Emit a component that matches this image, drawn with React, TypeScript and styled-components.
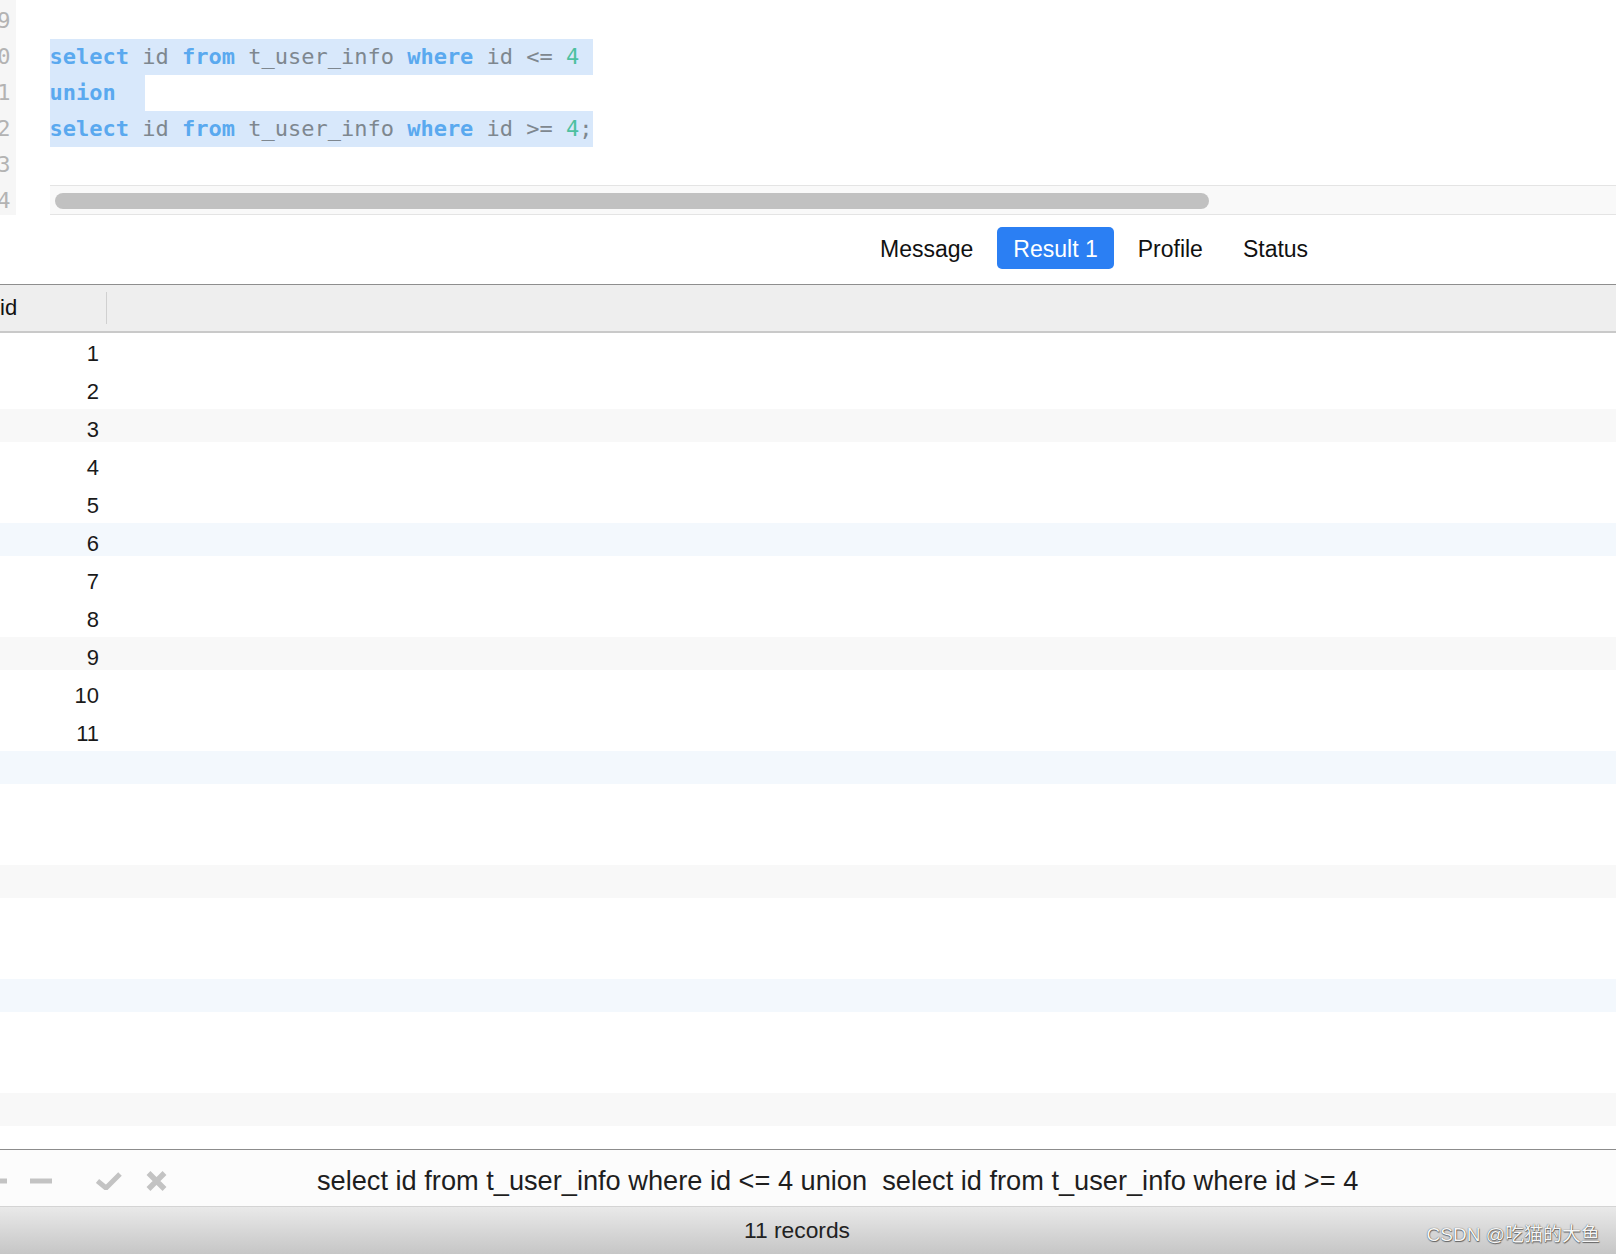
import styled, { createGlobalStyle } from 'styled-components';

const sans = `"Liberation Sans", Arial, sans-serif`;
const mono = `"DejaVu Sans Mono", "Liberation Mono", monospace`;

const GlobalStyle = createGlobalStyle`
  html, body {
    margin: 0;
    padding: 0;
    height: 100%;
    background: #ffffff;
    overflow: hidden;
  }

  #root {
    height: 100%;
  }
`;

const Window = styled.div`
  position: relative;
  display: flex;
  flex-direction: column;
  height: 1254px;
  font-family: ${sans};
  color: #1d1d1d;
`;

/* ---------- editor ---------- */

const Editor = styled.section`
  display: flex;
  height: 215px;
  flex-shrink: 0;
  overflow: hidden;
  font-family: ${mono};
  font-size: 22px;
`;

const Gutter = styled.div`
  width: 10.5px;
  padding: 2.5px 5.5px 0 0;
  background: #f6f6f6;
`;

const GutterLine = styled.div`
  display: flex;
  justify-content: flex-end;
  height: 36px;
  line-height: 36px;
  overflow: hidden;
  color: #b3b3b3;
`;

const CodePane = styled.div`
  flex: 1;
  min-width: 0;
  display: flex;
  flex-direction: column;
  margin-left: 33.5px;
  padding-top: 2.5px;
`;

const CodeLine = styled.div`
  height: 36px;
  line-height: 36px;
  white-space: pre;
  color: #7e878f;
`;

const Selection = styled.span<{ $cols: number }>`
  display: inline-block;
  width: ${(p) => p.$cols}ch;
  background: #d8e8fb;
`;

const Kw = styled.span`
  color: #5aa9ef;
  font-weight: bold;
`;

const Num = styled.span`
  color: #4dc0a0;
`;

const HScroll = styled.div`
  margin-top: 2.5px;
  height: 21px;
  padding: 7px 0 0 5.5px;
  background: #f9f9f9;
  border-top: 1px solid #e4e4e4;
  border-bottom: 1px solid #e4e4e4;
`;

const Thumb = styled.div`
  width: 1154px;
  height: 16px;
  border-radius: 8px;
  background: #c1c1c1;
`;

/* ---------- result tabs ---------- */

const TabBar = styled.nav`
  display: flex;
  align-items: flex-start;
  gap: 8px;
  height: 57px;
  padding: 12px 0 0 864px;
  border-bottom: 1px solid #8e8e8e;
  flex-shrink: 0;
`;

const Tab = styled.div<{ $active?: boolean }>`
  display: flex;
  align-items: center;
  height: 39px;
  padding: 3px 16px 0;
  border-radius: 5px;
  font-size: 23px;
  color: ${(p) => (p.$active ? '#ffffff' : '#111111')};
  background: ${(p) => (p.$active ? '#2b7ff3' : 'transparent')};
`;

/* ---------- grid ---------- */

const HeaderRow = styled.div`
  display: flex;
  align-items: center;
  height: 46px;
  background: #eeeeee;
  border-bottom: 2px solid #c9c9c9;
  flex-shrink: 0;
`;

const HeaderCell = styled.div`
  width: 106px;
  font-size: 22px;
  color: #111111;
`;

const ColumnDivider = styled.div`
  width: 1px;
  height: 32px;
  background: #d0d0d0;
`;

const Body = styled.div`
  flex: 1;
  min-height: 0;
  overflow: hidden;
`;

const tones = ['transparent', 'transparent', '#f8f8f8', 'transparent', 'transparent', '#f3f8fd'];

const Row = styled.div<{ $tone: string }>`
  display: flex;
  height: 38px;
  background: linear-gradient(${(p) => p.$tone}, ${(p) => p.$tone}) top / 100% 33px no-repeat;
`;

const Cell = styled.div`
  width: 99px;
  padding-top: 4px;
  text-align: right;
  line-height: 34px;
  font-size: 22px;
  color: #1a1a1a;
`;

/* ---------- footer ---------- */

const Toolbar = styled.div`
  display: flex;
  align-items: center;
  height: 50px;
  padding-top: 6px;
  background: #fcfcfc;
  border-top: 1px solid #8c8c8c;
  border-bottom: 1px solid #d4d4d4;
  flex-shrink: 0;
  overflow: hidden;
`;

const ToolIcon = styled.svg<{ $gap: number }>`
  flex-shrink: 0;
  margin-left: ${(p) => p.$gap}px;
`;

const QueryText = styled.div`
  margin-left: 150px;
  font-size: 27.2px;
  color: #1e1e1e;
  white-space: pre;
`;

const StatusBar = styled.div`
  display: flex;
  align-items: center;
  height: 47px;
  padding-left: 744px;
  background: linear-gradient(#e9e9e9, #c6c6c6);
  font-size: 22.8px;
  color: #222222;
  flex-shrink: 0;
`;

const Watermark = styled.div`
  position: absolute;
  right: 16px;
  bottom: 8px;
  font-family: ${sans}, "Noto Sans CJK SC";
  font-size: 19px;
  line-height: 22px;
  color: #f6f6f6;
  text-shadow: 0 0 1px rgba(0, 0, 0, 0.7), 0.5px 0.5px 1px rgba(0, 0, 0, 0.5);
`;

const ICON = '#c3c3c3';

const Minus = ({ gap }: { gap: number }) => (
  <ToolIcon $gap={gap} width="22" height="6" viewBox="0 0 22 6">
    <rect x="0" y="0.5" width="22" height="5" fill={ICON} />
  </ToolIcon>
);

const rowCount = 22;

export default function App() {
  return (
    <Window>
      <GlobalStyle />
      <Editor>
        <Gutter>
          {[19, 20, 21, 22, 23, 24].map((n) => (
            <GutterLine key={n}>
              <span>{n}</span>
            </GutterLine>
          ))}
        </Gutter>
        <CodePane>
          <CodeLine> </CodeLine>
          <CodeLine>
            <Selection $cols={41}>
              <Kw>select</Kw> id <Kw>from</Kw> t_user_info <Kw>where</Kw> id &lt;= <Num>4</Num>
            </Selection>
          </CodeLine>
          <CodeLine>
            <Selection $cols={7.2}>
              <Kw>union</Kw>
            </Selection>
          </CodeLine>
          <CodeLine>
            <Selection $cols={41}>
              <Kw>select</Kw> id <Kw>from</Kw> t_user_info <Kw>where</Kw> id &gt;= <Num>4</Num>;
            </Selection>
          </CodeLine>
          <CodeLine> </CodeLine>
          <HScroll>
            <Thumb />
          </HScroll>
        </CodePane>
      </Editor>

      <TabBar>
        <Tab>Message</Tab>
        <Tab $active>Result 1</Tab>
        <Tab>Profile</Tab>
        <Tab>Status</Tab>
      </TabBar>

      <HeaderRow>
        <HeaderCell>id</HeaderCell>
        <ColumnDivider />
      </HeaderRow>

      <Body>
        {Array.from({ length: rowCount }, (_, i) => (
          <Row key={i} $tone={tones[i % 6]}>
            <Cell>{i < 11 ? i + 1 : ''}</Cell>
          </Row>
        ))}
      </Body>

      <Toolbar>
        <Minus gap={-15} />
        <Minus gap={23} />
        <ToolIcon $gap={44} width="26" height="18" viewBox="0 0 26 18">
          <path d="M1.5 9 L10 16 L24 2" fill="none" stroke={ICON} strokeWidth="5" />
        </ToolIcon>
        <ToolIcon $gap={24} width="21" height="20" viewBox="0 0 21 20">
          <path d="M2.5 2 L18.5 18 M18.5 2 L2.5 18" fill="none" stroke={ICON} strokeWidth="5.5" />
        </ToolIcon>
        <QueryText>
          select id from t_user_info where id &lt;= 4 union  select id from t_user_info where id &gt;= 4
        </QueryText>
      </Toolbar>

      <StatusBar>11 records</StatusBar>
      <Watermark>CSDN @吃猫的大鱼</Watermark>
    </Window>
  );
}
